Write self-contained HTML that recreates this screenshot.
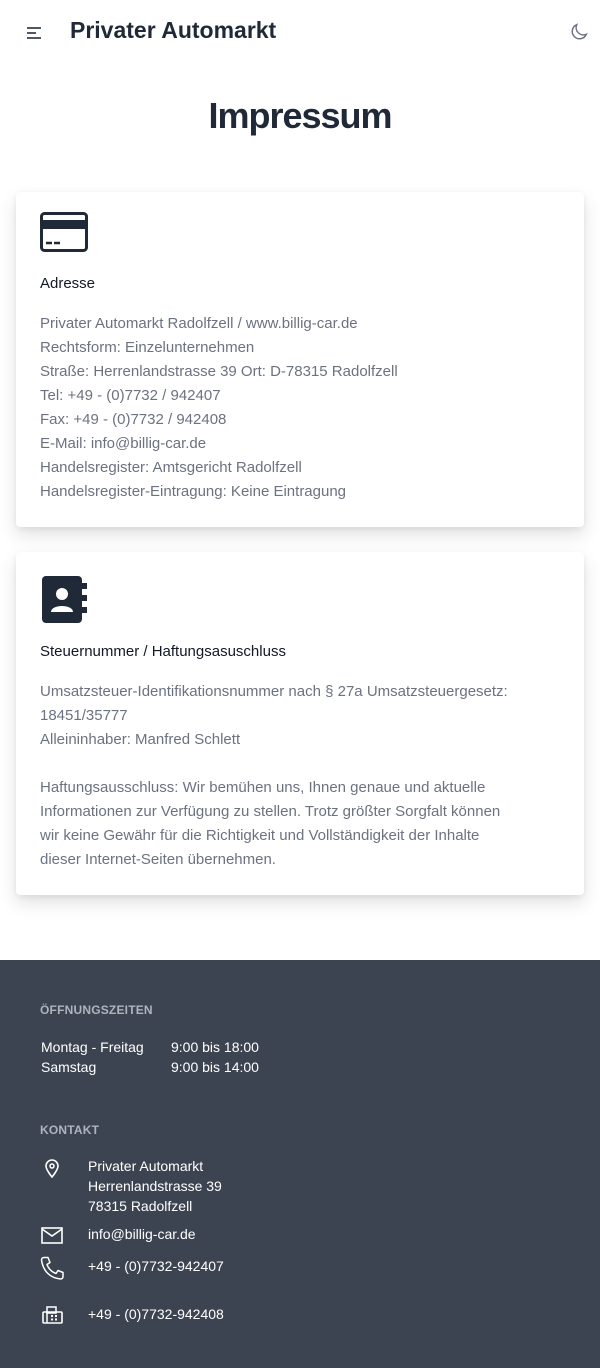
<!DOCTYPE html>
<html><head><meta charset="utf-8"><style>
*{box-sizing:border-box;margin:0;padding:0}
body{width:600px;height:1368px;background:#fff;font-family:"Liberation Sans",sans-serif;color:#1f2937;position:relative;overflow:hidden}
.abs{position:absolute}
.card{position:absolute;left:16px;width:568px;background:#fff;box-shadow:0 8px 18px rgba(0,0,0,.12),0 2px 6px rgba(0,0,0,.06);border-radius:4px}
.t{font-size:15px;color:#6b7280;line-height:24px;white-space:nowrap}
.h{font-size:15px;color:#111827}
footer{position:absolute;left:0;top:960px;width:600px;height:408px;background:#3d4451;color:#fff}
.fh{font-size:12px;font-weight:bold;color:#aeb4be;letter-spacing:.2px}
.f{font-size:14px;line-height:20px}
</style></head><body>
<svg class="abs" style="left:26px;top:26px" width="18" height="14"><path d="M1 2h14M1 7h9M1 12h14" stroke="#374151" stroke-width="1.8"/></svg>
<div class="abs" style="left:70px;top:17px;font-size:23px;font-weight:bold;color:#1f2937">Privater Automarkt</div>
<svg class="abs" style="left:568px;top:21px" width="22" height="22" viewBox="0 0 24 24"><path d="M20 14.5A8 8 0 0 1 9.5 4a8 8 0 1 0 10.5 10.5z" fill="none" stroke="#6b7280" stroke-width="1.6"/></svg>
<div class="abs" style="left:0;top:95px;width:600px;text-align:center;font-size:36px;font-weight:bold;letter-spacing:-1px;color:#1f2937">Impressum</div>

<div class="card" style="top:192px;height:335px">
<svg class="abs" style="left:24px;top:20px" width="48" height="40"><rect x="1.5" y="1.5" width="45" height="37" rx="3" fill="none" stroke="#1f2937" stroke-width="3"/><rect x="1.5" y="8" width="45" height="9" fill="#1f2937"/><path d="M6 31h6M14 31h6" stroke="#1f2937" stroke-width="2.5"/></svg>
<div class="abs h" style="left:24px;top:83px">Adresse</div>
<div class="abs t" style="left:24px;top:120px">Privater Automarkt Radolfzell / www.billig-car.de<br>Rechtsform: Einzelunternehmen<br>Straße: Herrenlandstrasse 39 Ort: D-78315 Radolfzell<br>Tel: +49 - (0)7732 / 942407<br>Fax: +49 - (0)7732 / 942408<br>E-Mail: info@billig-car.de<br>Handelsregister: Amtsgericht Radolfzell<br>Handelsregister-Eintragung: Keine Eintragung</div>
</div>

<div class="card" style="top:552px;height:343px">
<svg class="abs" style="left:24px;top:23px" width="48" height="50"><rect x="2" y="1" width="40" height="47" rx="4" fill="#1f2937"/><rect x="42" y="8" width="5" height="6" fill="#1f2937"/><rect x="42" y="20" width="5" height="6" fill="#1f2937"/><rect x="42" y="32" width="5" height="6" fill="#1f2937"/><circle cx="22" cy="19" r="6" fill="#fff"/><path d="M11 37c0-8 22-8 22 0z" fill="#fff"/></svg>
<div class="abs h" style="left:24px;top:91px">Steuernummer / Haftungsasuschluss</div>
<div class="abs t" style="left:24px;top:128px">Umsatzsteuer-Identifikationsnummer nach § 27a Umsatzsteuergesetz:<br>18451/35777<br>Alleininhaber: Manfred Schlett<br><br>Haftungsausschluss: Wir bemühen uns, Ihnen genaue und aktuelle<br>Informationen zur Verfügung zu stellen. Trotz größter Sorgfalt können<br>wir keine Gewähr für die Richtigkeit und Vollständigkeit der Inhalte<br>dieser Internet-Seiten übernehmen.</div>
</div>

<footer>
<div class="abs fh" style="left:40px;top:43px">ÖFFNUNGSZEITEN</div>
<div class="abs f" style="left:41px;top:77px">Montag - Freitag<br>Samstag</div>
<div class="abs f" style="left:171px;top:77px">9:00 bis 18:00<br>9:00 bis 14:00</div>
<div class="abs fh" style="left:40px;top:163px">KONTAKT</div>
<svg class="abs" style="left:44px;top:198px" width="16" height="20" viewBox="0 0 16 20"><path d="M8 19s-6-7-6-11a6 6 0 0 1 12 0c0 4-6 11-6 11z" fill="none" stroke="#fff" stroke-width="1.6"/><circle cx="8" cy="8" r="2" fill="none" stroke="#fff" stroke-width="1.5"/></svg>
<div class="abs f" style="left:88px;top:196px">Privater Automarkt<br>Herrenlandstrasse 39<br>78315 Radolfzell</div>
<svg class="abs" style="left:41px;top:267px" width="22" height="17"><rect x="1" y="1" width="20" height="15" fill="none" stroke="#fff" stroke-width="1.6"/><path d="M1 2l10 7 10-7" fill="none" stroke="#fff" stroke-width="1.6"/></svg>
<div class="abs f" style="left:88px;top:264px">info@billig-car.de</div>
<svg class="abs" style="left:40px;top:296px" width="26" height="25" viewBox="0 0 26 25"><path d="M4 1.5l4 0 2 5-3 2c1.5 4 5 7.5 9 9l2-3 5 2v4c0 1.5-1 2.5-2.5 2.5C10 22 3 15 1.5 4 1.5 2.5 2.5 1.5 4 1.5z" fill="none" stroke="#fff" stroke-width="1.5" stroke-linejoin="round"/></svg>
<div class="abs f" style="left:88px;top:296px">+49 - (0)7732-942407</div>
<svg class="abs" style="left:42px;top:346px" width="21" height="18" viewBox="0 0 21 18"><rect x="1" y="6" width="19" height="11" rx="1" fill="none" stroke="#fff" stroke-width="1.6"/><rect x="5" y="1" width="9" height="6" fill="none" stroke="#fff" stroke-width="1.5"/><path d="M5 7v10" stroke="#fff" stroke-width="1.5"/><rect x="9" y="9" width="2" height="2" fill="#fff"/><rect x="13" y="9" width="2" height="2" fill="#fff"/><rect x="9" y="12.5" width="2" height="2" fill="#fff"/><rect x="13" y="12.5" width="2" height="2" fill="#fff"/></svg>
<div class="abs f" style="left:88px;top:344px">+49 - (0)7732-942408</div>
</footer>
</body></html>
